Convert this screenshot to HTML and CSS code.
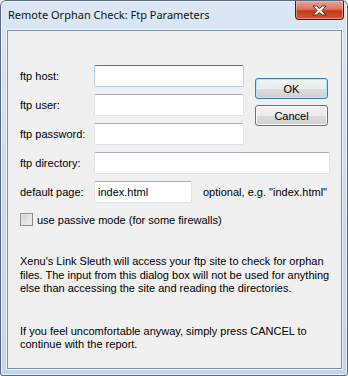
FILE: index.html
```html
<!DOCTYPE html>
<html>
<head>
    <title>Remote Orphan Check: Ftp Parameters</title>
    <link rel="stylesheet" href="styles.css">
</head>
<body>
    <div class="ventana">
        <div class="titulo">
            <span class="titulo-texto">Remote Orphan Check: Ftp Parameters</span>
            <div class="cerrar">
                <svg width="17" height="11" viewBox="0 0 17 11">
                    <path d="M2 1 L5.5 1 L8.5 3.5 L11.5 1 L15 1 L11 5.5 L15 10 L11.5 10 L8.5 7.5 L5.5 10 L2 10 L6 5.5 Z" fill="#ffffff" stroke="#5a2a22" stroke-width="1" stroke-linejoin="round"/>
                </svg>
            </div>
        </div>
        <div class="cliente">
            <div class="arriba">
                <div class="campos">
                    <label>ftp host:</label>
                    <div class="caja foco"></div>
                    <label>ftp user:</label>
                    <div class="caja"></div>
                    <label>ftp password:</label>
                    <div class="caja"></div>
                </div>
                <div class="botones">
                    <div class="boton defecto">OK</div>
                    <div class="boton">Cancel</div>
                </div>
            </div>
            <div class="fila">
                <label>ftp directory:</label>
                <div class="caja ancha"></div>
            </div>
            <div class="fila">
                <label>default page:</label>
                <div class="caja corta">index.html</div>
                <span class="nota">optional, e.g. "index.html"</span>
            </div>
            <div class="check">
                <span class="casilla"></span>
                <span>use passive mode (for some firewalls)</span>
            </div>
            <p class="texto">Xenu's Link Sleuth will access your ftp site to check for orphan files. The input from this dialog box will not be used for anything else than accessing the site and reading the directories.</p>
            <p class="texto segundo">If you feel uncomfortable anyway, simply press CANCEL to continue with the report.</p>
        </div>
    </div>
</body>
</html>
```

FILE: styles.css
```css
body {
    margin: 0;
    font-family: 'Liberation Sans', Arial, sans-serif;
    font-size: 11px;
    color: #000000;
    background-color: #ffffff;
}
.ventana {
    width: 346px;
    height: 374px;
    border: 1px solid #5b6a7e;
    border-radius: 6px 6px 3px 3px;
    background: linear-gradient(180deg, #dbe7f4 0%, #cddded 40%, #c3d5ea 100%);
    display: flex;
    flex-direction: column;
    box-shadow: inset 0 0 0 1px rgba(255, 255, 255, 0.6);
}
.titulo {
    height: 29px;
    display: flex;
    justify-content: space-between;
    align-items: flex-start;
}
.titulo-texto {
    font-family: 'Noto Sans', sans-serif;
    font-size: 11px;
    color: #111111;
    margin-left: 7px;
    margin-top: 6px;
}
.cerrar {
    width: 47px;
    height: 18px;
    margin-right: 3px;
    border: 1px solid #4c1e1a;
    border-top: none;
    border-radius: 0 0 4px 4px;
    background: linear-gradient(180deg, #e8a394 0%, #d9775f 45%, #c5381c 55%, #d2563a 100%);
    box-shadow: inset 0 0 0 1px rgba(255, 200, 180, 0.5);
    display: flex;
    justify-content: center;
    align-items: center;
}
.cliente {
    flex: 1;
    margin: 0 5px 6px 6px;
    border: 1px solid #7c8ea5;
    background-color: #f0f0f0;
    padding: 34px 10px 0 12px;
    box-shadow: 0 0 0 1px rgba(255, 255, 255, 0.7);
}
label {
    display: flex;
    align-items: center;
}
.arriba {
    display: flex;
}
.campos {
    display: grid;
    grid-template-columns: 74px 150px;
    grid-auto-rows: 22px;
    row-gap: 7px;
}
.caja {
    height: 20px;
    border: 1px solid #dfe2e8;
    border-top-color: #abadb3;
    border-radius: 2px;
    background-color: #ffffff;
    padding-left: 3px;
    display: flex;
    align-items: center;
}
.caja.foco {
    border-color: #b6d5ec;
    border-top-color: #3d7bad;
}
.caja.ancha {
    width: 231px;
}
.caja.corta {
    width: 93px;
}
.botones {
    margin-left: 11px;
    padding-top: 13px;
    display: flex;
    flex-direction: column;
    gap: 6px;
}
.boton {
    width: 71px;
    height: 19px;
    border: 1px solid #707070;
    border-radius: 3px;
    background: linear-gradient(180deg, #f2f2f2 0%, #ebebeb 50%, #dddddd 51%, #cfcfcf 100%);
    box-shadow: inset 0 0 0 1px rgba(255, 255, 255, 0.8);
    display: flex;
    justify-content: center;
    align-items: center;
}
.boton.defecto {
    border-color: #3c7fb1;
    box-shadow: inset 0 0 0 1px #b8e4fa;
}
.fila {
    display: grid;
    grid-template-columns: 74px auto auto;
    justify-content: start;
    height: 22px;
    margin-top: 7px;
}
.nota {
    margin-left: 11px;
    display: flex;
    align-items: center;
}
.check {
    display: flex;
    align-items: center;
    gap: 4px;
    margin-top: 10px;
}
.casilla {
    width: 11px;
    height: 11px;
    border: 1px solid #8e8f8f;
    background: linear-gradient(135deg, #cbcfd5 0%, #f2f2f2 100%);
    box-shadow: inset 0 0 0 1px #e6e6e6;
}
.texto {
    margin: 29px 0 0 0;
    line-height: 13.5px;
}
.texto.segundo {
    margin-top: 29px;
}
```
